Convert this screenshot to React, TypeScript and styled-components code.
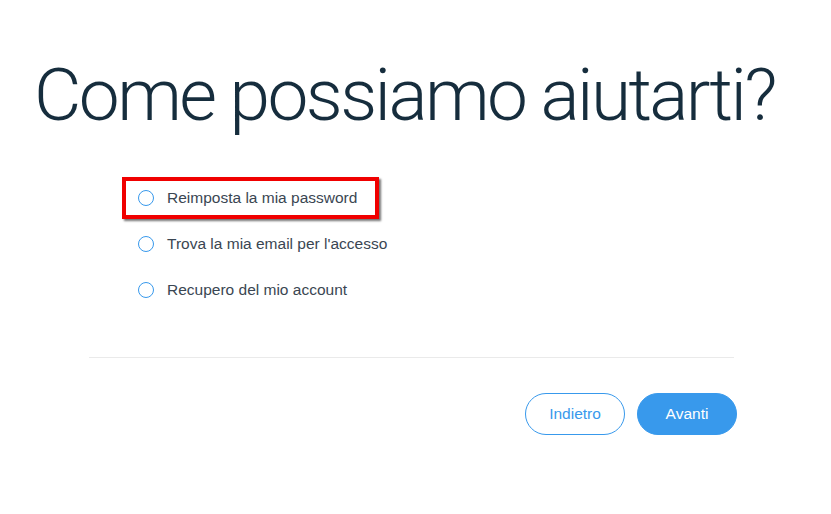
import React from "react";
import styled, { createGlobalStyle } from "styled-components";

const GlobalStyle = createGlobalStyle`
    html, body {
        margin: 0;
        padding: 0;
        background: #ffffff;
    }
    body {
        font-family: "Helvetica Neue", Roboto, "Liberation Sans", sans-serif;
    }
`;

const options = [
    { id: "reset", label: "Reimposta la mia password", highlighted: true },
    { id: "email", label: "Trova la mia email per l'accesso", highlighted: false },
    { id: "recover", label: "Recupero del mio account", highlighted: false },
];

const App: React.FunctionComponent = () => {
    return (
        <>
            <GlobalStyle />
            <Page>
                <Title>Come possiamo aiutarti?</Title>
                <Panel>
                    <OptionList>
                        {options.map(option => (
                            <OptionRow key={option.id} highlighted={option.highlighted}>
                                <Radio />
                                <OptionLabel>{option.label}</OptionLabel>
                            </OptionRow>
                        ))}
                    </OptionList>
                    <Divider />
                    <Actions>
                        <Button>Indietro</Button>
                        <Button primary>Avanti</Button>
                    </Actions>
                </Panel>
            </Page>
        </>
    );
};

const Page = styled.div`
    width: 831px;
    display: flex;
    flex-direction: column;
    padding-top: 52px;
`;

const Title = styled.h1`
    margin: 0 0 0 34px;
    font-family: Roboto, "Liberation Sans", sans-serif;
    font-weight: 300;
    font-size: 73px;
    line-height: 86px;
    letter-spacing: -2.6px;
    color: #162d3d;
    white-space: nowrap;
`;

const Panel = styled.div`
    width: 645px;
    margin-left: 89px;
    margin-top: 39px;
    display: flex;
    flex-direction: column;
`;

const OptionList = styled.div`
    display: flex;
    flex-direction: column;
    gap: 4px;
    padding-left: 33px;
`;

const OptionRow = styled.div.withConfig({
    shouldForwardProp: prop => prop !== "highlighted",
})<{ highlighted?: boolean }>`
    display: flex;
    align-items: center;
    height: 34px;
    width: 237px;
    padding-left: 12px;
    border: 4px solid ${p => (p.highlighted ? "#f00000" : "transparent")};
    box-shadow: ${p => (p.highlighted ? "2px 2px 2px rgba(0, 0, 0, 0.55)" : "none")};
`;

const Radio = styled.span`
    width: 16px;
    height: 16px;
    border: 1.5px solid #3899ec;
    border-radius: 50%;
    box-sizing: border-box;
    flex-shrink: 0;
`;

const OptionLabel = styled.span`
    margin-left: 13px;
    font-family: "Liberation Sans", Arial, sans-serif;
    font-size: 15.5px;
    color: #3a4652;
    white-space: nowrap;
`;

const Divider = styled.div`
    height: 1px;
    background: #eaeaea;
    margin-top: 46px;
`;

const Actions = styled.div`
    display: flex;
    justify-content: flex-end;
    gap: 12px;
    margin-top: 35px;
    margin-right: -3px;
`;

const Button = styled.button.withConfig({
    shouldForwardProp: prop => prop !== "primary",
})<{ primary?: boolean }>`
    width: 100px;
    height: 42px;
    border-radius: 21px;
    border: 1px solid #3899ec;
    background: ${p => (p.primary ? "#3899ec" : "#ffffff")};
    color: ${p => (p.primary ? "#ffffff" : "#3899ec")};
    font-family: "Liberation Sans", Arial, sans-serif;
    font-size: 15.5px;
    cursor: pointer;
    padding: 0;
`;

export default App;
